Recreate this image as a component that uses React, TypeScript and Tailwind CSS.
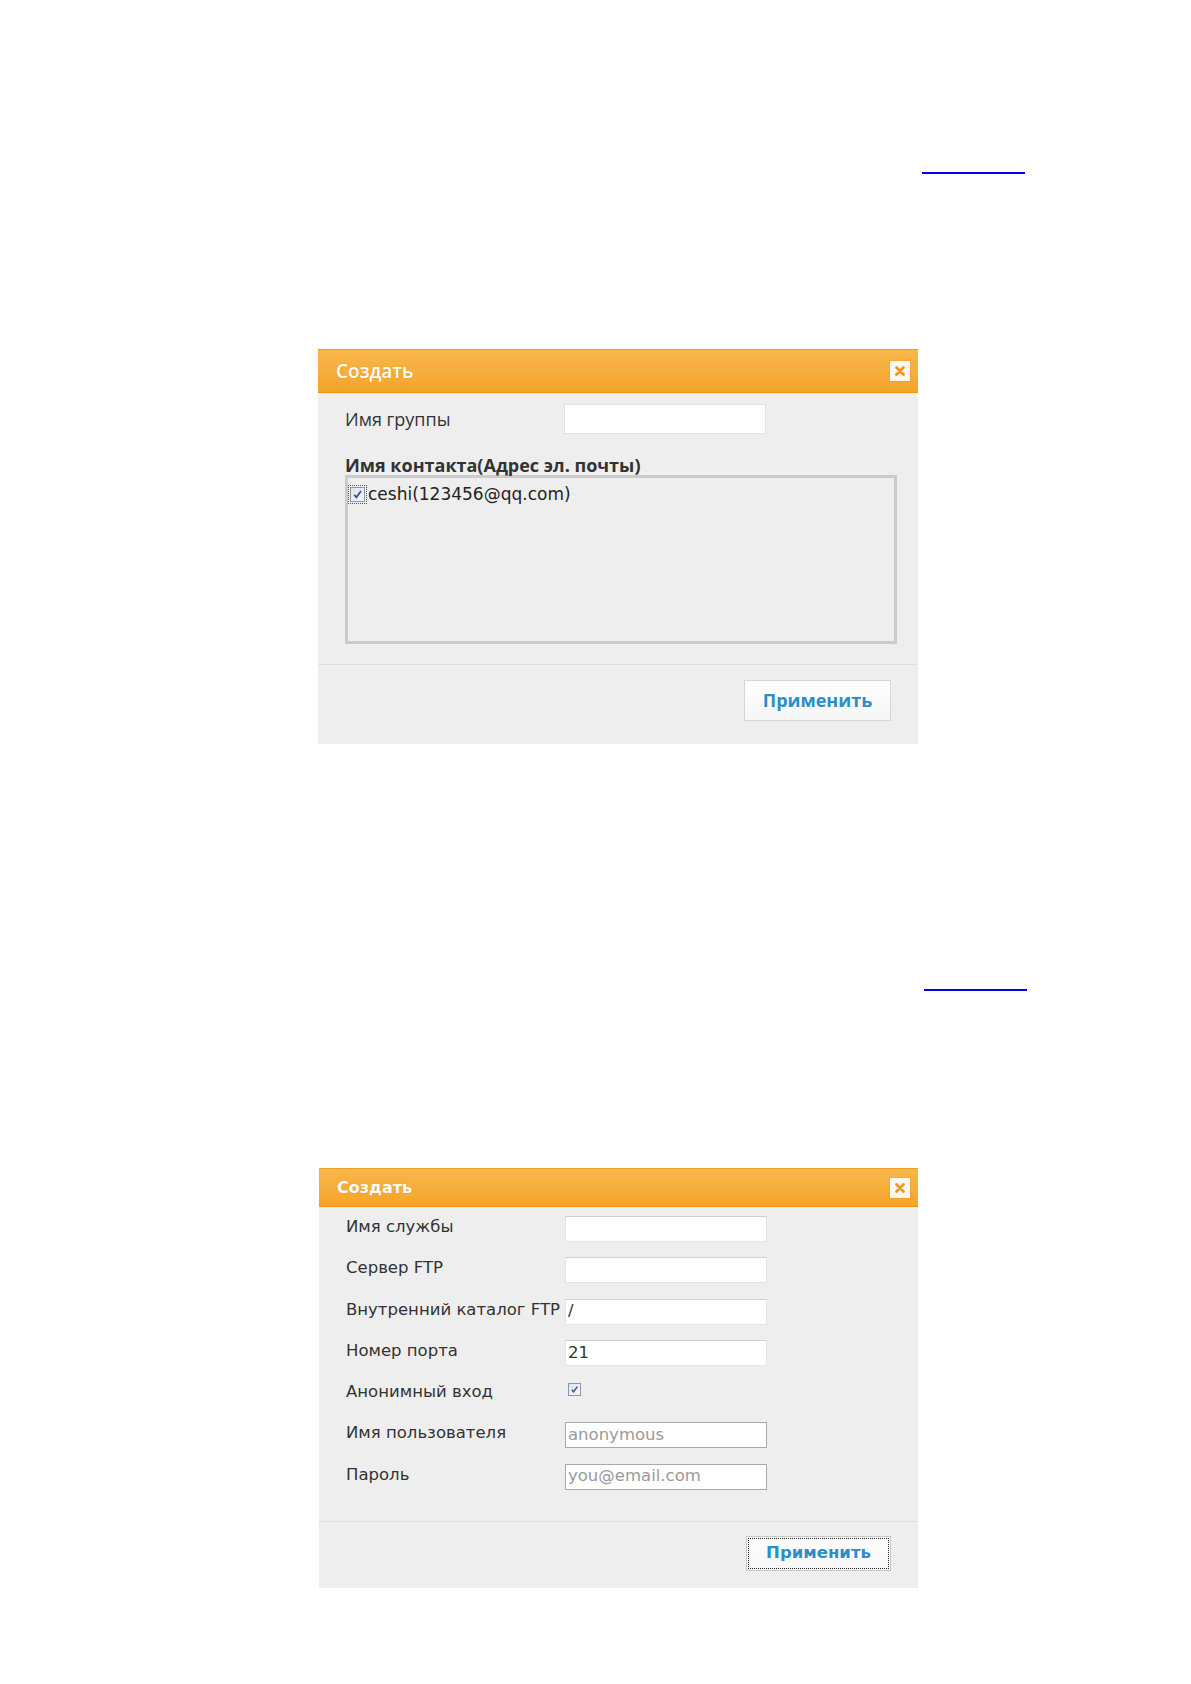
import React from "react";

function CloseBox() {
  return (
    <div className="w-[20px] h-[20px] bg-[#fbf6ee] flex items-center justify-center shadow-[0_0_1px_rgba(0,0,0,0.2)]">
      <svg width="10" height="10" viewBox="0 0 10 10">
        <path d="M1.5 1.5 L8.5 8.5 M8.5 1.5 L1.5 8.5" stroke="#f0921c" strokeWidth="2.6" strokeLinecap="round" />
      </svg>
    </div>
  );
}

function Check({ size }: { size: number }) {
  return (
    <span
      className="inline-flex items-center justify-center border border-[#8d97a8] bg-gradient-to-br from-[#dde3ef] to-[#f4f6fa]"
      style={{ width: size, height: size }}
    >
      <svg width={size - 4} height={size - 4} viewBox="0 0 10 10">
        <path d="M2 5.2 L4 7.6 L8.2 1.8" stroke="#3a4c8c" strokeWidth="1.6" fill="none" />
      </svg>
    </span>
  );
}

function Header({ title, h, bold }: { title: string; h: string; bold?: boolean }) {
  return (
    <div
      className={`${h} flex items-center justify-between pl-[18px] pr-[8px] border-t border-[#f3a021] border-b border-b-[#ef9518] bg-gradient-to-b from-[#f8b64a] via-[#f6ae3c] to-[#f4a327]`}
    >
      <span
        className={`text-white ${bold ? "font-bold text-[16px] font-['DejaVu_Sans',sans-serif]" : "font-semibold text-[19px] font-['Open_Sans',sans-serif]"} [text-shadow:0_0_1px_rgba(180,100,0,0.4)]`}
      >
        {title}
      </span>
      <CloseBox />
    </div>
  );
}

function Underline({ mr }: { mr: string }) {
  return (
    <div className="flex justify-end">
      <div className={`w-[103px] h-[2px] bg-[#0000e6] ${mr}`} />
    </div>
  );
}

function GroupDialog() {
  return (
    <div className="ml-[318px] w-[600px] bg-[#eeeeee] font-['Open_Sans',sans-serif] text-[#333]">
      <Header title="Создать" h="h-[44px]" />
      <div className="px-[27px] pt-[11px]">
        <div className="flex items-center h-[30px]">
          <span className="w-[219px] text-[18px]">Имя группы</span>
          <div className="w-[202px] h-[30px] bg-white border border-[#e2e2e2]" />
        </div>
        <div className="mt-[19px] text-[18px] font-bold leading-[24px]">Имя контакта(Адрес эл. почты)</div>
        <div className="mt-[-2px] w-[552px] h-[169px] border-[3px] border-[#cbcbcb] pl-[1px] pt-[5px]">
          <div className="flex items-center">
            <span className="flex outline-1 outline-dotted outline-[#555] p-[1px]">
              <Check size={15} />
            </span>
            <span className="ml-[2px] text-[17px] text-[#222] font-['DejaVu_Sans',sans-serif] leading-[22px]">
              ceshi(123456@qq.com)
            </span>
          </div>
        </div>
      </div>
      <div className="mt-[20px] border-t border-[#dddddd] flex justify-end pr-[27px] pt-[15px] pb-[23px]">
        <button className="w-[147px] h-[41px] bg-gradient-to-b from-white to-[#f5f5f5] border border-[#d6d6d6] text-[#2a8fc6] font-bold text-[18px]">
          Применить
        </button>
      </div>
    </div>
  );
}

const rows: { label: string; value?: string; kind?: "check" | "gray" }[] = [
  { label: "Имя службы" },
  { label: "Сервер FTP" },
  { label: "Внутренний каталог FTP", value: "/" },
  { label: "Номер порта", value: "21" },
  { label: "Анонимный вход", kind: "check" },
  { label: "Имя пользователя", value: "anonymous", kind: "gray" },
  { label: "Пароль", value: "you@email.com", kind: "gray" },
];

function FtpDialog() {
  return (
    <div className="ml-[319px] w-[599px] bg-[#eeeeee] font-['DejaVu_Sans',sans-serif] text-[#333]">
      <Header title="Создать" h="h-[39px]" bold />
      <div className="pl-[27px] pt-[9px]">
        {rows.map((r) => (
          <div key={r.label} className="flex items-start h-[41.3px]">
            <span className="w-[219px] text-[16.5px] leading-[20px] whitespace-nowrap pt-[1px]">{r.label}</span>
            {r.kind === "check" ? (
              <div className="flex pt-[2px] pl-[3px]">
                <Check size={13} />
              </div>
            ) : (
              <div
                className={`w-[202px] h-[26px] bg-white border flex items-center px-[2px] text-[16.5px] ${
                  r.kind === "gray"
                    ? "border-[#a9a9a9] text-[#9a9a9a]"
                    : "border-[#e4e4e4] border-t-[#d0d0d0] text-[#333]"
                }`}
              >
                {r.value}
              </div>
            )}
          </div>
        ))}
      </div>
      <div className="mt-[16px] border-t border-[#dddddd] flex justify-end pr-[27px] pt-[14px] pb-[17px]">
        <button className="w-[145px] h-[35px] bg-gradient-to-b from-white to-[#f6f6f6] border border-[#c8c8c8] outline-1 outline-dotted outline-[#222] outline-offset-[-3px] text-[#2a8fc6] font-bold text-[16.5px]">
          Применить
        </button>
      </div>
    </div>
  );
}

export default function App() {
  return (
    <div className="w-[1191px] h-[1684px] bg-white pt-[172px]">
      <Underline mr="mr-[166px]" />
      <div className="mt-[175px]">
        <GroupDialog />
      </div>
      <div className="mt-[245px]">
        <Underline mr="mr-[164px]" />
      </div>
      <div className="mt-[177px]">
        <FtpDialog />
      </div>
    </div>
  );
}
